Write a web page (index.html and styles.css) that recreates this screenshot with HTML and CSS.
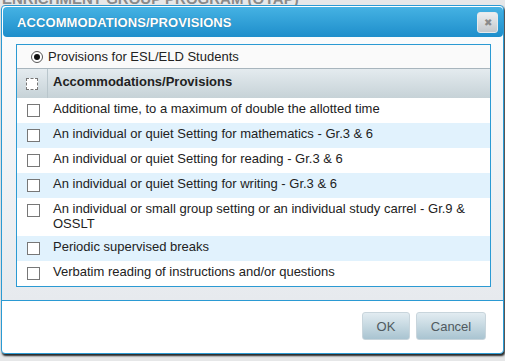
FILE: index.html
```html
<!DOCTYPE html>
<html>
<head>
<meta charset="utf-8">
<link rel="stylesheet" href="styles.css">
</head>
<body>
<div class="page-bg">ENRICHMENT GROUP PROGRAM (OYAP)</div>
<div class="dialog">
  <div class="titlebar">
    <span class="title">ACCOMMODATIONS/PROVISIONS</span>
    <span class="close">&#x2716;</span>
  </div>
  <div class="content">
    <div class="panel">
      <div class="radio-row"><span class="radio"></span><span>Provisions for ESL/ELD Students</span></div>
      <div class="grid-head">
        <div class="cb-col head-cb"><span class="cb dashed"></span></div>
        <div class="head-text">Accommodations/Provisions</div>
      </div>
      <div class="row"><div class="cb-col"><span class="cb"></span></div><div class="text">Additional time, to a maximum of double the allotted time</div></div>
      <div class="row alt"><div class="cb-col"><span class="cb"></span></div><div class="text">An individual or quiet Setting for mathematics - Gr.3 &amp; 6</div></div>
      <div class="row"><div class="cb-col"><span class="cb"></span></div><div class="text">An individual or quiet Setting for reading - Gr.3 &amp; 6</div></div>
      <div class="row alt"><div class="cb-col"><span class="cb"></span></div><div class="text">An individual or quiet Setting for writing - Gr.3 &amp; 6</div></div>
      <div class="row"><div class="cb-col"><span class="cb"></span></div><div class="text">An individual or small group setting or an individual study carrel - Gr.9 &amp; OSSLT</div></div>
      <div class="row alt"><div class="cb-col"><span class="cb"></span></div><div class="text">Periodic supervised breaks</div></div>
      <div class="row"><div class="cb-col"><span class="cb"></span></div><div class="text">Verbatim reading of instructions and/or questions</div></div>
    </div>
  </div>
  <div class="footer">
    <span class="btn ok">OK</span>
    <span class="btn cancel">Cancel</span>
  </div>
</div>
</body>
</html>
```
FILE: styles.css
```css
html, body {
  margin: 0;
  padding: 0;
}
body {
  background: #e6e7e8;
  font-family: "Liberation Sans", Arial, sans-serif;
  font-size: 13px;
  color: #222;
  width: 505px;
  height: 361px;
  overflow: hidden;
  position: relative;
}
.page-bg {
  margin-top: -9px;
  padding-left: 2px;
  font-size: 15px;
  font-weight: bold;
  color: #8a8a8a;
  line-height: 16px;
}
.dialog {
  position: absolute;
  left: 1px;
  top: 5px;
  width: 501px;
  border: 1px solid #2b9ad3;
  border-radius: 4px;
  background: #fff;
  box-shadow: 1px 2px 2px rgba(0, 0, 0, 0.85);
}
.titlebar {
  margin: 1px 0 0 1px;
  height: 30px;
  border-radius: 4px;
  background: linear-gradient(#45b2e3, #1e8ecb);
  border: 0;
  display: flex;
  align-items: center;
  justify-content: space-between;
  padding: 0 5px 0 14px;
}
.title {
  color: #fff;
  font-weight: bold;
  font-size: 13px;
  letter-spacing: 0.1px;
  text-shadow: 0 0 1px rgba(0, 0, 0, 0.3);
}
.close {
  width: 19px;
  height: 19px;
  border: 1px solid #e6eaec;
  border-radius: 3px;
  background: linear-gradient(#eceef0, #c3c8cc);
  color: #8a8a8a;
  font-size: 10px;
  display: flex;
  align-items: center;
  justify-content: center;
}
.content {
  background: linear-gradient(#fafbfc, #e7eaee);
  padding: 7px 12px 13px 14px;
}
.panel {
  border: 1px solid #2b9ad3;
  background: #fff;
}
.radio-row {
  height: 23px;
  background: #fafafa;
  display: flex;
  align-items: center;
  padding-left: 14px;
  line-height: 15px;
}
.radio {
  width: 10px;
  height: 10px;
  border: 1px solid #555;
  border-radius: 50%;
  background: #fff;
  margin-right: 5px;
  display: flex;
  align-items: center;
  justify-content: center;
}
.radio::after {
  content: "";
  width: 6px;
  height: 6px;
  border-radius: 50%;
  background: #111;
}
.grid-head {
  display: flex;
  height: 29px;
  border-top: 1px solid #a8b5bd;
  background: linear-gradient(#e4ebef, #c6d2d7);
}
.cb-col {
  width: 30px;
  flex: none;
  padding-left: 10px;
  box-sizing: border-box;
}
.head-cb {
  border-right: 1px solid #b9c6cc;
  width: 31px;
  padding-left: 9px;
  padding-top: 9px;
}
.head-text {
  font-weight: bold;
  padding: 5px 0 0 5px;
  line-height: 15px;
  color: #222;
}
.cb {
  display: block;
  width: 11px;
  height: 11px;
  border: 1px solid #777;
  background: #fff;
}
.cb.dashed {
  border: 1px dashed #777;
  width: 10px;
  height: 10px;
}
.row {
  display: flex;
  align-items: flex-start;
  min-height: 25px;
  box-sizing: border-box;
}
.row.alt {
  background: #e1f2fd;
}
.row .cb-col {
  width: 31px;
  padding-top: 6px;
}
.text {
  padding: 3px 10px 5px 5px;
  line-height: 15px;
}
.footer {
  border-top: 1px solid #2b9ad3;
  display: flex;
  justify-content: flex-end;
  gap: 6px;
  padding: 11px 17px 13px 0;
}
.btn {
  height: 26px;
  border: 1px solid #c8d5dc;
  border-radius: 3px;
  background: linear-gradient(#e2ecf1, #a9c4d1);
  color: #505a60;
  font-size: 13px;
  display: flex;
  align-items: center;
  justify-content: center;
}
.ok {
  width: 46px;
}
.cancel {
  width: 68px;
}
```
